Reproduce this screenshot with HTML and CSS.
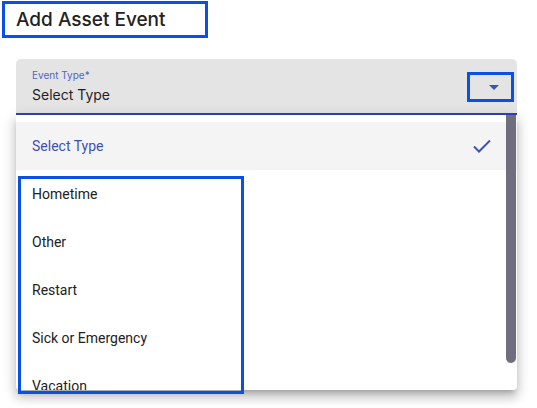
FILE: index.html
```html
<!DOCTYPE html>
<html lang="en">
<head>
    <meta charset="UTF-8">
    <meta name="viewport" content="width=device-width, initial-scale=1.0">
    <title>Add Asset Event</title>
    <link rel="stylesheet" href="styles.css">
</head>
<body>
    <div class="page">
        <h1 class="title">Add Asset Event</h1>

        <div class="select-field">
            <div class="select-value">
                <label>Event Type*</label>
                <div class="value">Select Type</div>
            </div>
            <div class="arrow-wrap">
                <span class="arrow"></span>
            </div>
        </div>

        <div class="panel-wrap">
            <div class="panel">
                <div class="option selected">
                    <span>Select Type</span>
                    <svg class="check" width="20" height="16" viewBox="0 0 20 16">
                        <path d="M2 8.5 L7 13.5 L18 2.5" fill="none" stroke="#3f51b5" stroke-width="2"/>
                    </svg>
                </div>
                <div class="option">Hometime</div>
                <div class="option">Other</div>
                <div class="option">Restart</div>
                <div class="option">Sick or Emergency</div>
                <div class="option">Vacation</div>
                <div class="scrollbar"></div>
            </div>
            <div class="highlight"></div>
        </div>
    </div>
</body>
</html>
```

FILE: styles.css
```css
* {
    margin: 0;
    padding: 0;
    box-sizing: border-box;
}

body {
    background: #fff;
    font-family: 'Roboto', 'Inter', sans-serif;
    color: #212121;
    width: 537px;
    height: 408px;
    overflow: hidden;
}

.page {
    padding: 1px 20px 0 16px;
}

.title {
    font-family: 'Inter', sans-serif;
    font-size: 19px;
    font-weight: 500;
    color: #222;
    height: 37px;
    line-height: 31px;
    margin-left: -14px;
    width: 206px;
    padding-left: 11px;
    border: 3px solid #0a4fe6;
}

.select-field {
    margin-top: 21px;
    height: 56px;
    background: #e4e4e4;
    border-radius: 5px 5px 0 0;
    border-bottom: 2px solid #2e45b8;
    display: flex;
    align-items: center;
    justify-content: space-between;
    padding: 0 3px 0 16px;
}

.select-value label {
    display: block;
    font-family: 'Inter', sans-serif;
    font-size: 10px;
    color: #5067c8;
}

.select-value .value {
    font-family: 'Inter', sans-serif;
    font-size: 14px;
    color: #1f1f1f;
    margin-top: 5px;
}

.arrow-wrap {
    width: 47px;
    height: 30px;
    border: 3px solid #0a4fe6;
    display: flex;
    align-items: center;
    justify-content: flex-end;
    padding-right: 12px;
    margin-top: 2px;
}

.arrow {
    width: 0;
    height: 0;
    border-left: 5px solid transparent;
    border-right: 5px solid transparent;
    border-top: 5px solid #3f51b5;
}

.panel-wrap {
    position: relative;
}

.panel {
    position: relative;
    height: 275px;
    background: #fff;
    border-radius: 0 0 4px 4px;
    box-shadow: 0 5px 5px -3px rgba(0,0,0,.2), 0 8px 10px 1px rgba(0,0,0,.14), 0 3px 14px 2px rgba(0,0,0,.12);
    padding-top: 7px;
    overflow: hidden;
}

.option {
    height: 48px;
    display: flex;
    align-items: center;
    padding: 0 16px;
    font-size: 14px;
    color: #212121;
}

.option.selected {
    background: #f4f4f4;
    color: #3f51b5;
    justify-content: space-between;
    padding-right: 25px;
}

/* annotation box drawn over the option list */
.highlight {
    position: absolute;
    top: 61px;
    left: 2px;
    width: 226px;
    height: 218px;
    border: 3px solid #0a4fe6;
}

.scrollbar {
    position: absolute;
    top: 0;
    right: 1px;
    width: 10px;
    height: 248px;
    background: #706e7e;
    border-radius: 0 0 5px 5px;
}
```
